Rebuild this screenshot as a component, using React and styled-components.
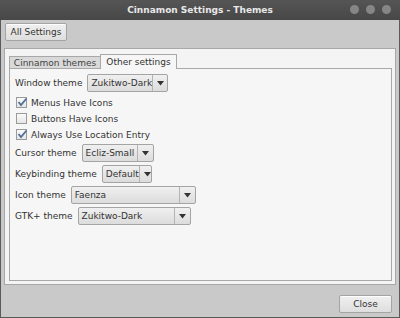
import * as React from 'react';
import styled, { createGlobalStyle } from 'styled-components';

const Global = createGlobalStyle`
  html, body { margin: 0; padding: 0; background: #c9c9c9; }
  body { font-family: "DejaVu Sans", sans-serif; font-size: 9px; color: #333; white-space: nowrap; }
`;

const Window = styled.div`
  width: 400px;
  height: 318px;
  box-sizing: border-box;
  display: flex;
  flex-direction: column;
  background: #c9c9c9;
  border: 1px solid #5a5a5a;
  border-top: none;
`;

const TitleBar = styled.div`
  height: 20px;
  flex: none;
  position: relative;
  display: flex;
  align-items: center;
  justify-content: center;
  background: linear-gradient(#555 0%, #474747 100%);
  color: #e8e8e8;
  font-weight: bold;
  font-size: 9px;
  margin: 0 -1px;
`;

const Dots = styled.div`
  position: absolute;
  right: 9px;
  top: 5px;
  display: flex;
  gap: 7px;
`;

const Dot = styled.span`
  width: 9px;
  height: 9px;
  border-radius: 50%;
  background: #868686;
`;

const Toolbar = styled.div`
  padding: 3px 4px 0 4px;
  height: 22px;
  flex: none;
`;

const Button = styled.button`
  font: inherit;
  color: #333;
  height: 18px;
  padding: 0 4px;
  border: 1px solid #a4a4a4;
  border-radius: 2px;
  background: linear-gradient(#f0f0f0, #dedede);
  box-shadow: inset 0 1px 0 #fff;
  width: ${p => p.$w}px;
`;

const Outer = styled.div`
  margin: 3px 3px 0 3px;
  height: 237px;
  box-sizing: border-box;
  border: 1px solid #a8a8a8;
  background: #f4f4f4;
  padding: 5px 3px 3px 4px;
  display: flex;
  flex-direction: column;
`;

const Tabs = styled.div`
  display: flex;
  align-items: flex-end;
  height: 15px;
  flex: none;
  position: relative;
  z-index: 1;
  margin-bottom: -1px;
`;

const Tab = styled.div`
  box-sizing: border-box;
  height: ${p => (p.$active ? 15 : 13)}px;
  width: ${p => p.$w}px;
  padding: 0 4px;
  display: flex;
  align-items: center;
  justify-content: center;
  border: 1px solid #a8a8a8;
  border-bottom: ${p => (p.$active ? 'none' : '1px solid #a8a8a8')};
  background: ${p => (p.$active ? '#f6f6f6' : '#d9d9d9')};
  color: ${p => (p.$active ? '#333' : '#444')};
  margin-left: ${p => (p.$active ? '-1px' : '0')};
`;

const Page = styled.div`
  flex: 1;
  border: 1px solid #a8a8a8;
  background: #f6f6f6;
  padding: 5px 5px;
  display: flex;
  flex-direction: column;
  gap: 3px;
`;

const Row = styled.div`
  display: flex;
  align-items: center;
  gap: 5px;
  height: 18px;
  margin-bottom: ${p => p.$after || 0}px;
`;

const CheckRow = styled.label`
  display: flex;
  align-items: center;
  gap: 4px;
  height: 13px;
  padding-left: 1px;
`;

const Box = styled.span`
  width: 9px;
  height: 9px;
  border: 1px solid #9a9a9a;
  background: linear-gradient(#fafafa, #e6e6e6);
  position: relative;
  flex: none;
`;

const Combo = styled.div`
  box-sizing: border-box;
  width: ${p => p.$w}px;
  height: 18px;
  display: flex;
  border: 1px solid #a4a4a4;
  border-radius: 2px;
  background: linear-gradient(#f0f0f0, #dcdcdc);
`;

const ComboText = styled.span`
  flex: 1;
  display: flex;
  align-items: center;
  padding-left: 3px;
  color: #333;
`;

const ComboArrow = styled.span`
  width: 15px;
  flex: none;
  border-left: 1px solid #b4b4b4;
  display: flex;
  align-items: center;
  justify-content: center;
`;

const Footer = styled.div`
  flex: 1;
  display: flex;
  justify-content: flex-end;
  align-items: flex-start;
  padding: 10px 7px 0 0;
`;

function Check({ checked, children }) {
  return (
    <CheckRow>
      <Box>
        {checked && (
          <svg width="11" height="10" viewBox="0 0 11 10" style={{ position: 'absolute', left: 0, top: -1 }}>
            <path d="M1.5 5 L4 8 L9.5 1.5" fill="none" stroke="#4d6f99" strokeWidth="1.8" />
          </svg>
        )}
      </Box>
      {children}
    </CheckRow>
  );
}

function Select({ w, value }) {
  return (
    <Combo $w={w}>
      <ComboText>{value}</ComboText>
      <ComboArrow>
        <svg width="7" height="5" viewBox="0 0 7 5">
          <path d="M0 0 H7 L3.5 4.5 Z" fill="#333" />
        </svg>
      </ComboArrow>
    </Combo>
  );
}

export default function App() {
  return (
    <>
      <Global />
      <Window>
        <TitleBar>
          Cinnamon Settings - Themes
          <Dots>
            <Dot />
            <Dot />
            <Dot />
          </Dots>
        </TitleBar>
        <Toolbar>
          <Button $w={62}>All Settings</Button>
        </Toolbar>
        <Outer>
          <Tabs>
            <Tab $w={92}>Cinnamon themes</Tab>
            <Tab $w={77} $active>Other settings</Tab>
          </Tabs>
          <Page>
            <Row $after={1}>
              Window theme <Select w={81} value="Zukitwo-Dark" />
            </Row>
            <Check checked>Menus Have Icons</Check>
            <Check>Buttons Have Icons</Check>
            <Check checked>Always Use Location Entry</Check>
            <Row>
              Cursor theme <Select w={72} value="Ecliz-Small" />
            </Row>
            <Row>
              Keybinding theme <Select w={50} value="Default" />
            </Row>
            <Row>
              Icon theme <Select w={125} value="Faenza" />
            </Row>
            <Row>
              GTK+ theme <Select w={113} value="Zukitwo-Dark" />
            </Row>
          </Page>
        </Outer>
        <Footer>
          <Button $w={53}>Close</Button>
        </Footer>
      </Window>
    </>
  );
}
